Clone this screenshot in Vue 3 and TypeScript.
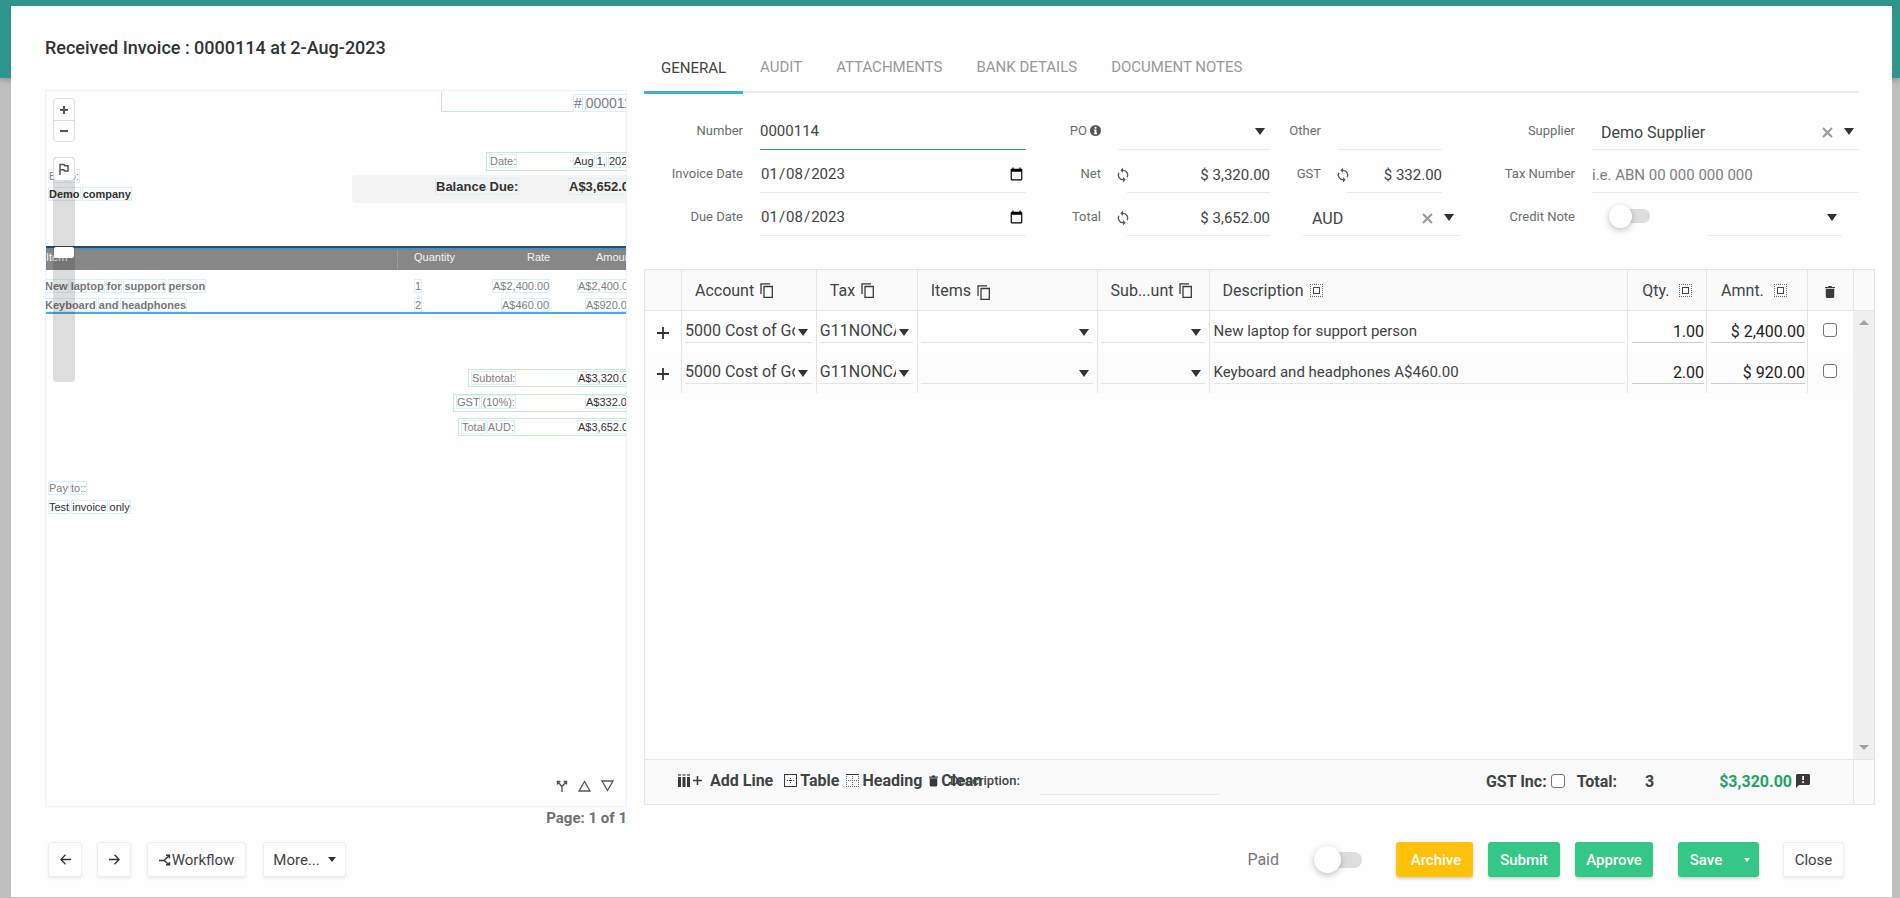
<script setup lang="ts">
import { ref } from 'vue'

interface Mark {
  text: string
  x: number
  y: number
  size?: number
  tone?: string
}

interface Line {
  account: string
  tax: string
  description: string
  qty: string
  amount: string
  remove: boolean
}

const tabs = ['GENERAL', 'AUDIT', 'ATTACHMENTS', 'BANK DETAILS', 'DOCUMENT NOTES']
const activeTab = ref('GENERAL')

const number = ref('0000114')
const invoiceDate = ref('2023-01-08')
const dueDate = ref('2023-01-08')
const net = ref('$ 3,320.00')
const total = ref('$ 3,652.00')
const gst = ref('$ 332.00')
const other = ref('')
const taxNumber = ref('')
const creditNote = ref(false)
const paid = ref(false)
const gstInc = ref(false)
const footDescription = ref('')

const lines = ref<Line[]>([
  { account: '5000 Cost of Goods Sold', tax: 'G11NONCAP', description: 'New laptop for support person', qty: '1.00', amount: '$ 2,400.00', remove: false },
  { account: '5000 Cost of Goods Sold', tax: 'G11NONCAP', description: 'Keyboard and headphones A$460.00', qty: '2.00', amount: '$ 920.00', remove: false },
])

const columns = [
  { key: 'add', width: 37 },
  { key: 'account', width: 135 },
  { key: 'tax', width: 101 },
  { key: 'items', width: 180 },
  { key: 'sub', width: 112 },
  { key: 'description', width: 419 },
  { key: 'qty', width: 79 },
  { key: 'amount', width: 101 },
  { key: 'remove', width: 45 },
]
const columnTotal = columns.reduce((sum, c) => sum + c.width, 0)
const colWidth = (w: number) => ({ width: (w / columnTotal) * 100 + '%' })

const marks: Mark[] = [
  { text: '# 0000114', x: 528, y: 12, size: 14, tone: 'soft' },
  { text: 'Date:', x: 444, y: 70, tone: 'soft' },
  { text: 'Aug 1, 2023', x: 528, y: 70 },
  { text: 'Balance Due:', x: 390, y: 96, size: 13, tone: 'bold' },
  { text: 'A$3,652.00', x: 523, y: 96, size: 13, tone: 'bold' },
  { text: 'Bill to:', x: 3, y: 85, tone: 'soft' },
  { text: 'Demo company', x: 3, y: 103, tone: 'bold' },
  { text: 'Item', x: 0, y: 166, tone: 'plain' },
  { text: 'Quantity', x: 368, y: 166, tone: 'plain' },
  { text: 'Rate', x: 481, y: 166, tone: 'plain' },
  { text: 'Amount', x: 550, y: 166, tone: 'plain' },
  { text: 'New laptop for support person', x: -1, y: 195, tone: 'semi' },
  { text: '1', x: 369, y: 195, tone: 'soft' },
  { text: 'A$2,400.00', x: 447, y: 195, tone: 'soft' },
  { text: 'A$2,400.00', x: 532, y: 195, tone: 'soft' },
  { text: 'Keyboard and headphones', x: -1, y: 214, tone: 'semi' },
  { text: '2', x: 369, y: 214, tone: 'soft' },
  { text: 'A$460.00', x: 456, y: 214, tone: 'soft' },
  { text: 'A$920.00', x: 540, y: 214, tone: 'soft' },
  { text: 'Subtotal:', x: 426, y: 287, tone: 'soft' },
  { text: 'A$3,320.00', x: 532, y: 287 },
  { text: 'GST (10%):', x: 411, y: 311, tone: 'soft' },
  { text: 'A$332.00', x: 540, y: 311 },
  { text: 'Total AUD:', x: 416, y: 336, tone: 'soft' },
  { text: 'A$3,652.00', x: 532, y: 336 },
  { text: 'Pay to::', x: 3, y: 397, tone: 'soft' },
  { text: 'Test invoice only', x: 3, y: 416 },
]

const regions = [
  { x: 395, y: -20, h: 41 },
  { x: 440, y: 61, h: 19 },
  { x: 422, y: 278, h: 18 },
  { x: 407, y: 303, h: 18 },
  { x: 412, y: 327, h: 18 },
]
</script>

<template>
  <div class="page">
    <div class="topbar"></div>
    <main class="modal">
      <div class="body">
        <section class="left">
          <h1>Received Invoice : 0000114 at 2-Aug-2023</h1>
          <div class="viewer">
            <div class="sheet">
              <div class="balance"></div>
              <div class="thead"><i></i></div>
              <div class="tend"></div>
              <div v-for="(r, i) in regions" :key="'r' + i" class="region" :style="{ left: r.x + 'px', top: r.y + 'px', height: r.h + 'px' }"></div>
              <span
                v-for="(m, i) in marks"
                :key="i"
                class="mark"
                :class="m.tone"
                :style="{ left: m.x + 'px', top: m.y - 8 + 'px', fontSize: (m.size ?? 11) + 'px' }"
              ><template v-for="(w, j) in m.text.split(' ')" :key="j">{{ j ? ' ' : '' }}<b>{{ w }}</b></template></span>
            </div>
            <div class="zoomer">
              <div class="zoombtns">
                <button type="button" aria-label="Zoom in"><svg width="8" height="8" viewBox="0 0 8 8"><path d="M4 0v8M0 4h8" stroke="#555" stroke-width="2" /></svg></button>
                <button type="button" aria-label="Zoom out"><svg width="8" height="8" viewBox="0 0 8 8"><path d="M0 4h8" stroke="#555" stroke-width="2" /></svg></button>
              </div>
              <div class="track">
                <button type="button" aria-label="Flag"><svg width="12" height="12" viewBox="0 0 12 12" fill="none" stroke="#555" stroke-width="1.5"><path d="M2 12V1.5H6L6.8 2.8H10V8H6.6L5.8 6.8H2" /></svg></button>
                <div class="knob"></div>
              </div>
            </div>
            <div class="pager">
              <button type="button" aria-label="Split"><svg width="12" height="12" viewBox="0 0 12 12" fill="none" stroke="#555" stroke-width="1.4"><path d="M6 12V6.5L2 2M6 6.5L10 2M1.500 4.500V1.500H4.500M7.500 1.500H10.500V4.500" /></svg></button>
              <button type="button" aria-label="Previous page"><svg width="13" height="12" viewBox="0 0 13 12" fill="none" stroke="#555" stroke-width="1.3"><path d="M6.500 1.500L12 11H1Z" /></svg></button>
              <button type="button" aria-label="Next page"><svg width="13" height="12" viewBox="0 0 13 12" fill="none" stroke="#555" stroke-width="1.3"><path d="M6.500 10.500L1 1H12Z" /></svg></button>
            </div>
          </div>
          <p class="pageno">Page: 1 of 1</p>
        </section>

        <section class="right">
          <nav class="tabs">
            <button v-for="t in tabs" :key="t" type="button" :class="{ on: t === activeTab }" @click="activeTab = t">{{ t }}</button>
          </nav>

          <form class="form" @submit.prevent>
            <label class="lab" for="f-number">Number</label>
            <div class="cell focus"><input id="f-number" v-model="number" type="text" /></div>
            <label class="lab" for="f-po">PO <svg class="info" width="11" height="11" viewBox="0 0 12 12"><circle cx="6" cy="6" r="6" fill="#555" /><path d="M5 2h2v2H5zM4.500 5H7v3.500h.7V10H4.300V8.500H5V6.300h-.5z" fill="#fefefe" /></svg></label>
            <div class="cell drop"><select id="f-po"><option></option></select></div>
            <label class="lab" for="f-other">Other</label>
            <div class="cell"><input id="f-other" v-model="other" type="text" /></div>
            <label class="lab" for="f-supplier">Supplier</label>
            <div class="cell drop big"><select id="f-supplier"><option>Demo Supplier</option></select><button class="clear" type="button" aria-label="Clear supplier"><svg width="11" height="11" viewBox="0 0 11 11"><path d="M1 1l9 9M10 1l-9 9" stroke="#999" stroke-width="2" /></svg></button></div>

            <label class="lab" for="f-idate">Invoice Date</label>
            <div class="cell"><input id="f-idate" v-model="invoiceDate" type="date" /></div>
            <label class="lab" for="f-net">Net</label>
            <div class="sync">
              <button type="button" aria-label="Recalculate net"><svg width="16" height="16" viewBox="0 0 24 24"><path fill="#555" d="M12 4V1L8 5l4 4V6c3.300 0 6 2.700 6 6 0 1-.25 2-.7 2.800l1.500 1.500A8 8 0 0 0 12 4zm0 14c-3.300 0-6-2.700-6-6 0-1 .25-2 .7-2.800L5.200 7.700A8 8 0 0 0 12 20v3l4-4-4-4z" /></svg></button>
              <div class="cell num"><input id="f-net" v-model="net" type="text" /></div>
            </div>
            <label class="lab" for="f-gst">GST</label>
            <div class="sync">
              <button type="button" aria-label="Recalculate GST"><svg width="16" height="16" viewBox="0 0 24 24"><path fill="#555" d="M12 4V1L8 5l4 4V6c3.300 0 6 2.700 6 6 0 1-.25 2-.7 2.800l1.500 1.500A8 8 0 0 0 12 4zm0 14c-3.300 0-6-2.700-6-6 0-1 .25-2 .7-2.800L5.200 7.700A8 8 0 0 0 12 20v3l4-4-4-4z" /></svg></button>
              <div class="cell num"><input id="f-gst" v-model="gst" type="text" /></div>
            </div>
            <label class="lab" for="f-tax">Tax Number</label>
            <div class="cell num-left"><input id="f-tax" v-model="taxNumber" type="text" placeholder="i.e. ABN 00 000 000 000" /></div>

            <label class="lab" for="f-ddate">Due Date</label>
            <div class="cell"><input id="f-ddate" v-model="dueDate" type="date" /></div>
            <label class="lab" for="f-total">Total</label>
            <div class="sync">
              <button type="button" aria-label="Recalculate total"><svg width="16" height="16" viewBox="0 0 24 24"><path fill="#555" d="M12 4V1L8 5l4 4V6c3.300 0 6 2.700 6 6 0 1-.25 2-.7 2.800l1.500 1.500A8 8 0 0 0 12 4zm0 14c-3.300 0-6-2.700-6-6 0-1 .25-2 .7-2.800L5.200 7.700A8 8 0 0 0 12 20v3l4-4-4-4z" /></svg></button>
              <div class="cell num"><input id="f-total" v-model="total" type="text" /></div>
            </div>
            <div class="cell drop big currency"><select aria-label="Currency"><option>AUD</option></select><button class="clear" type="button" aria-label="Clear currency"><svg width="11" height="11" viewBox="0 0 11 11"><path d="M1 1l9 9M10 1l-9 9" stroke="#999" stroke-width="2" /></svg></button></div>
            <label class="lab" for="f-credit">Credit Note</label>
            <div class="credit">
              <input id="f-credit" v-model="creditNote" class="toggle small" type="checkbox" />
              <div class="cell drop"><select aria-label="Credit note invoice"><option></option></select></div>
            </div>
          </form>

          <div class="grid">
            <div class="gbody">
              <div class="tablewrap">
                <table>
                  <colgroup><col v-for="c in columns" :key="c.key" :style="colWidth(c.width)" /></colgroup>
                  <thead>
                    <tr>
                      <th></th>
                      <th v-for="h in ['Account', 'Tax', 'Items', 'Sub...unt']" :key="h"><div class="hd" :class="{ low: h === 'Items' }"><span>{{ h }}</span><svg width="13" height="15" viewBox="0 0 13 15" fill="none" stroke="#3a3a3a" stroke-width="1.300"><path d="M4 3.500H12.300V14.300H4ZM1 11V.8H10" /></svg></div></th>
                      <th v-for="h in ['Description', 'Qty.', 'Amnt.']" :key="h"><div class="hd" :class="{ wide: h !== 'Description' }"><span>{{ h }}</span><svg width="13" height="13" viewBox="0 0 13 13" fill="none" stroke="#444" shape-rendering="crispEdges"><path d="M0 .5H13M0 12.500H13M.5 2V12M12.500 2V12" stroke="#666" stroke-dasharray="1 1" /><rect x="3.500" y="3.500" width="6" height="6" /></svg></div></th>
                      <th class="bin"><svg width="10" height="12" viewBox="0 0 10 12"><path d="M0 1H3L3.500 0H6.500L7 1H10V2.300H0ZM.8 3H9.200V11L8.200 12H1.800L.8 11Z" fill="#3a3a3a" /></svg></th>
                    </tr>
                  </thead>
                  <tbody>
                    <tr v-for="(l, i) in lines" :key="i">
                      <td class="plus"><button type="button" aria-label="Add line below"><svg width="12" height="12" viewBox="0 0 12 12"><path d="M6 0v12M0 6h12" stroke="#333" stroke-width="1.800" /></svg></button></td>
                      <td><div class="gcell drop"><select aria-label="Account"><option>{{ l.account }}</option></select></div></td>
                      <td><div class="gcell drop"><select aria-label="Tax"><option>{{ l.tax }}</option></select></div></td>
                      <td><div class="gcell drop"><select aria-label="Items"><option></option></select></div></td>
                      <td><div class="gcell drop"><select aria-label="Sub account"><option></option></select></div></td>
                      <td><div class="gcell text"><input v-model="l.description" type="text" aria-label="Description" /></div></td>
                      <td><div class="gcell money"><input v-model="l.qty" type="text" aria-label="Quantity" /></div></td>
                      <td><div class="gcell money"><input v-model="l.amount" type="text" aria-label="Amount" /></div></td>
                      <td class="tick"><input v-model="l.remove" class="check" type="checkbox" aria-label="Remove line" /></td>
                    </tr>
                  </tbody>
                </table>
              </div>
              <div class="scroll">
                <div class="stub"></div>
                <div class="bar"><i class="up"></i><i class="down"></i></div>
              </div>
            </div>
            <div class="gfoot">
              <div class="tools">
                <button type="button"><svg width="12" height="13" viewBox="0 0 12 13" fill="#3a3a3a"><path d="M0 0h3v2H0zM4.500 0h3v2h-3zM9 0h3v2H9z" opacity=".6" /><path d="M0 3h3v10H0zM4.500 3h3v10h-3zM9 3h3v10H9z" /></svg><svg width="9" height="9" viewBox="0 0 9 9"><path d="M4.500 0v9M0 4.500h9" stroke="#3a3a3a" stroke-width="1.600" /></svg><span class="first">Add Line</span></button>
                <button type="button" class="t2"><svg width="13" height="13" viewBox="0 0 13 13" fill="none" stroke="#3a3a3a" shape-rendering="crispEdges"><rect x=".5" y=".5" width="12" height="12" /><path d="M3 6.500h8M6.500 4v6" stroke-dasharray="1 1" /></svg><span>Table</span></button>
                <button type="button"><svg width="13" height="13" viewBox="0 0 13 13" fill="none" stroke="#3a3a3a" shape-rendering="crispEdges"><path d="M0 .5h13" /><path d="M0 6.500h13M0 12.500h13M.5 2v11M6.500 2v11M12.500 2v11" stroke="#666" stroke-dasharray="1 1" /></svg><span>Heading</span></button>
                <button type="button"><svg width="9" height="12" viewBox="0 0 10 12"><path d="M0 1H3L3.500 0H6.500L7 1H10V2.300H0ZM.8 3H9.200V11L8.200 12H1.800L.8 11Z" fill="#3a3a3a" /></svg><span>Clean</span></button>
              </div>
              <label class="fdesc" for="f-desc">Description:</label>
              <input id="f-desc" v-model="footDescription" class="fline" type="text" />
              <div class="sums">
                <label for="f-inc">GST Inc:</label><input id="f-inc" v-model="gstInc" class="check" type="checkbox" />
                <span>Total:</span><span class="count">3</span>
                <span class="green">$3,320.00</span>
                <svg width="14" height="14" viewBox="0 0 14 14"><path d="M1 0H13L14 1V10L13 11H3L0 14V1Z" fill="#3a3a3a" /><path d="M6.200 2h1.800v4H6.200zM6.200 7.200h1.800V9H6.200z" fill="#fff" /></svg>
              </div>
              <div class="fstub"></div>
            </div>
          </div>
        </section>
      </div>

      <footer class="actions">
        <button type="button" class="btn sq" aria-label="Previous"><svg width="11" height="11" viewBox="0 0 11 11" fill="none" stroke="#333" stroke-width="1.300"><path d="M11 5.500H1M5.500 .8L.9 5.500L5.500 10.200" /></svg></button>
        <button type="button" class="btn sq" aria-label="Next"><svg width="11" height="11" viewBox="0 0 11 11" fill="none" stroke="#333" stroke-width="1.300"><path d="M0 5.500H10M5.500 .8L10.100 5.500L5.500 10.200" /></svg></button>
        <button type="button" class="btn flowbtn"><svg width="12" height="12" viewBox="0 0 12 12" fill="none" stroke="#333" stroke-width="1.400"><path d="M0 6.500H5L10 1.800M5 6.500L10 10.500M7 1.300H10.500V4.500M7 10.800H10.500V8" /></svg><span>Workflow</span></button>
        <button type="button" class="btn more">More... <i class="caret"></i></button>
        <span class="spacer"></span>
        <label class="paid" for="f-paid">Paid</label>
        <input id="f-paid" v-model="paid" class="toggle" type="checkbox" />
        <button type="button" class="btn solid amber">Archive</button>
        <button type="button" class="btn solid submit">Submit</button>
        <button type="button" class="btn solid approve">Approve</button>
        <div class="split"><button type="button" class="btn solid save">Save</button><button type="button" class="btn solid arrow" aria-label="More save options"><i class="caret"></i></button></div>
        <button type="button" class="btn close">Close</button>
      </footer>
    </main>
  </div>
</template>

<style>
body { margin: 0; background: #bfbfbf; }
</style>

<style scoped>
* { box-sizing: border-box; }
.page { position: relative; min-height: 100vh; padding: 6px 8px 0 11px; display: flex; flex-direction: column; font-family: Roboto, "Liberation Sans", sans-serif; color: #3f4444; font-size: 16px; }
button, input, select { font: inherit; color: inherit; background: none; border: 0; padding: 0; margin: 0; outline: 0; border-radius: 0; }
svg { display: block; flex: none; }
.topbar { position: absolute; left: 0; right: 0; top: 0; height: 78px; background: #2d958c; box-shadow: 0 2px 6px rgba(0, 0, 0, .25); }
.modal { position: relative; flex: 1; display: flex; flex-direction: column; background: #fefefe; border-bottom: 1px solid #c4c4c4; }
.body { flex: 1; display: grid; grid-template-columns: 582fr 1231fr; column-gap: 17px; padding: 0 17px 0 34px; }
.left, .right { display: flex; flex-direction: column; min-width: 0; }
h1 { margin: 0; height: 84px; padding-top: 30px; font-size: 18px; line-height: 24px; font-weight: 500; color: #2f3434; }

.viewer { position: relative; flex: 1; border: 1px solid #e9f4fc; overflow: hidden; }
.sheet { position: absolute; inset: 0; font-family: "Liberation Sans", Arial, sans-serif; }
.mark { position: absolute; line-height: 16px; white-space: nowrap; color: #333; }
.mark b { font-weight: inherit; box-shadow: 0 0 0 1px #dcf0f9; }
.mark.soft { color: #808080; }
.mark.bold { font-weight: 700; }
.mark.semi { font-weight: 700; color: #777; }
.mark.plain { color: #f4f4f4; }
.mark.plain b { box-shadow: none; }
.region { position: absolute; right: -10px; border: 1px solid #c9ebc9; }
.balance { position: absolute; left: 306px; right: -10px; top: 84px; height: 28px; border-radius: 4px; background: #f4f4f4; }
.thead { position: absolute; left: 0; right: 0; top: 155px; height: 24px; background: #878787; border-top: 2px solid #444; box-shadow: inset 0 2px #4a90bd; }
.thead i { position: absolute; left: 351px; top: 2px; bottom: 0; width: 1px; background: #999; }
.tend { position: absolute; left: 0; right: 0; top: 221px; height: 2px; background: #52a9dc; }
.zoomer { position: absolute; left: 7px; top: 7px; width: 22px; }
.zoombtns { border: 1px solid #ddd; border-radius: 4px; background: #fff; }
.zoombtns button { display: flex; width: 20px; height: 21px; align-items: center; justify-content: center; }
.zoombtns button + button { border-top: 1px solid #ddd; }
.track { position: relative; margin-top: 15px; height: 225px; border-radius: 4px; background: rgba(0, 0, 0, .13); }
.track button { display: flex; width: 22px; height: 24px; align-items: center; justify-content: center; background: #fff; border: 1px solid #ddd; border-radius: 4px; }
.knob { position: absolute; left: 1px; top: 90px; width: 20px; height: 11px; background: #fff; border-radius: 2px; }
.pager { position: absolute; right: 12px; bottom: 14px; display: flex; gap: 10px; }
.pageno { margin: 0; height: 21px; line-height: 22px; text-align: right; font-size: 15px; font-weight: 700; color: #707070; white-space: nowrap; }

.tabs { display: flex; height: 87px; padding-top: 34px; margin-right: 16px; border-bottom: 2px solid #e9ecef; }
.tabs button { height: 53px; padding: 2px 17px 0; line-height: 51px; font-size: 15px; color: #999; white-space: nowrap; }
.tabs button.on { height: 54px; padding-top: 3px; color: #3f4444; border-bottom: 3px solid #3cb0e5; }

.form { display: grid; grid-template-columns: 116fr 266fr 92fr 152fr 68fr 104fr 150fr 267fr; grid-auto-rows: 43px; margin: 14px 16px 33px 0; font-size: 15px; }
.lab { display: flex; align-items: center; justify-content: flex-end; gap: 3px; padding: 3px 17px 0 0; font-size: 13px; color: #6a6e6e; white-space: nowrap; }
.cell { position: relative; min-width: 0; border-bottom: 1px solid #e8ebeb; display: flex; align-items: center; padding-top: 6px; }
.cell.focus { border-color: #27a060; }
.cell input, .cell select { width: 100%; min-width: 0; }
.cell input::placeholder { color: #7c8080; opacity: 1; }
select { appearance: none; width: 100%; }
.drop { position: relative; }
.drop::after { content: ""; position: absolute; right: 5px; top: 21px; border: 5px solid transparent; border-top: 7px solid #333; border-bottom: 0; pointer-events: none; }
.num, .num-left { padding-top: 8px; }
.num input { text-align: right; }
.sync { display: flex; min-width: 0; }
.sync > button { width: 9px; padding-top: 7px; flex: none; display: flex; align-items: center; justify-content: center; }
.sync .cell { flex: 1; }
.big { padding-top: 8px; }
.big select { font-size: 16px; padding-left: 9px; }
.clear { position: absolute; right: 26px; top: 20px; }
.currency { grid-column: span 2; margin: 0 -17px 0 33px; }
.credit { display: flex; justify-content: space-between; align-items: stretch; padding: 0 17px 0 17px; }
.credit .cell { width: 133px; }
.toggle { appearance: none; position: relative; width: 48px; height: 16px; border-radius: 8px; background: #ddd; flex: none; }
.toggle::before { content: ""; position: absolute; left: 0; top: -6px; width: 27px; height: 27px; border-radius: 50%; background: #fff; box-shadow: 0 2px 6px rgba(0, 0, 0, .25); }
.toggle.small { width: 41px; height: 14px; margin-top: 16px; }
.toggle.small::before { top: -4px; width: 23px; height: 23px; }

.grid { flex: 1; display: flex; flex-direction: column; margin-bottom: 23px; border: 1px solid #e4e6e6; }
.gbody { flex: 1; display: flex; }
.tablewrap { flex: 1; min-width: 0; }
table { width: 100%; table-layout: fixed; border-collapse: separate; border-spacing: 0; }
th, td { padding: 0; text-align: left; font-weight: 400; border-right: 1px solid #e4e6e6; }
th { height: 41px; background: #fafafa; border-bottom: 1px solid #e4e6e6; }
tr > :last-child { border-right: 0; }
td { height: 41px; vertical-align: top; }
tbody tr:nth-child(even) td { background: #fcfcfc; }
.hd { display: flex; align-items: center; gap: 6px; padding-left: 13px; white-space: nowrap; }
.hd.wide { gap: 10px; padding-left: 14px; }
.hd.low svg { margin-top: 4px; }
.bin svg { margin: 4px auto 0; }
.plus button { display: flex; width: 100%; justify-content: center; padding-top: 16px; }
.gcell { height: 32px; margin: 0 4px 0 3px; border-bottom: 1px solid #e4e6e6; }
.gcell select { height: 31px; padding: 9px 17px 0 0; line-height: 20px; text-overflow: clip; overflow: hidden; }
.gcell.drop::after { right: 4px; top: 18px; }
.gcell input { width: 100%; height: 31px; padding-top: 9px; }
.gcell.text { font-size: 15px; margin-right: 2px; margin-left: 4px; }
.gcell.money { margin-left: 4px; margin-right: 2px; border-color: #c8cccc; color: #222; }
.gcell.money input { text-align: right; }
.check { appearance: none; display: block; width: 14px; height: 14px; border: 1px solid #767676; border-radius: 3px; background: #fff; flex: none; }
.tick .check { margin: 12px auto 0; }
.scroll { width: 21px; display: flex; flex-direction: column; }
.stub { height: 41px; background: #fafafa; border-left: 1px solid #e4e6e6; border-bottom: 1px solid #e4e6e6; }
.bar { flex: 1; background: #f0f0f0; display: flex; flex-direction: column; justify-content: space-between; align-items: center; padding: 9px 0; }
.bar i { width: 0; height: 0; border: 5px solid transparent; }
.bar .up { border-top: 0; border-bottom-color: #a3a3a3; }
.bar .down { border-bottom: 0; border-top-color: #a3a3a3; }
.gfoot { height: 45px; display: flex; background: #fafafa; border-top: 1px solid #e4e6e6; font-weight: 700; padding-left: 33px; }
.tools { display: flex; width: 272px; height: 41px; align-items: center; gap: 7px; }
.tools button { display: flex; align-items: center; white-space: nowrap; flex: none; gap: 3px; }
.first { margin-left: 5px; }
.tools .t2 { margin-left: 4px; }
.fdesc { font-size: 13px; font-weight: 500; line-height: 41px; color: #3f4444; width: 89px; }
.fline { width: 180px; height: 35px; border-bottom: 1px solid #e4e9e9; }
.sums { flex: 1; display: flex; justify-content: flex-end; align-items: center; height: 42px; padding-right: 43px; white-space: nowrap; }
.sums .check { margin: 0 12px 0 4px; }
.count { width: 78px; padding-left: 28px; }
.green { width: 101px; padding-right: 4px; text-align: right; color: #1fa463; }
.fstub { width: 21px; border-left: 1px solid #e4e6e6; }

.actions { height: 69px; display: flex; align-items: flex-start; padding: 14px 48px 0 37px; }
.btn { height: 35px; border: 1px solid #eee; border-radius: 3px; background: #fefefe; box-shadow: 0 2px 3px rgba(0, 0, 0, .07); font-size: 15px; display: flex; align-items: center; justify-content: center; white-space: nowrap; }
.sq { width: 34px; margin-right: 15px; }
.flowbtn { width: 99px; margin-right: 17px; gap: 1px; }
.more { width: 83px; gap: 8px; }
.sq + .flowbtn { margin-left: 1px; }
.caret { width: 0; height: 0; border: 4px solid transparent; border-top: 5px solid #333; border-bottom: 0; }
.spacer { flex: 1; }
.paid { line-height: 35px; color: #777; margin-right: 35px; }
.actions .toggle { margin: 10px 34px 0 0; }
.solid { border: 0; color: #fff; background: #34c785; font-weight: 500; box-shadow: 0 2px 3px rgba(0, 0, 0, .18); }
.amber { width: 77px; background: #ffc10a; margin-right: 15px; padding-left: 3px; }
.submit { width: 72px; margin-right: 15px; }
.approve { width: 78px; margin-right: 25px; }
.split { display: flex; margin-right: 24px; box-shadow: 0 2px 3px rgba(0, 0, 0, .18); border-radius: 3px; }
.split .btn { box-shadow: none; }
.save { width: 56px; border-radius: 3px 0 0 3px; }
.arrow { width: 25px; border-radius: 0 3px 3px 0; }
.arrow .caret { border-width: 4px 3px 0; border-top-color: #fff; }
.close { width: 61px; }
</style>
